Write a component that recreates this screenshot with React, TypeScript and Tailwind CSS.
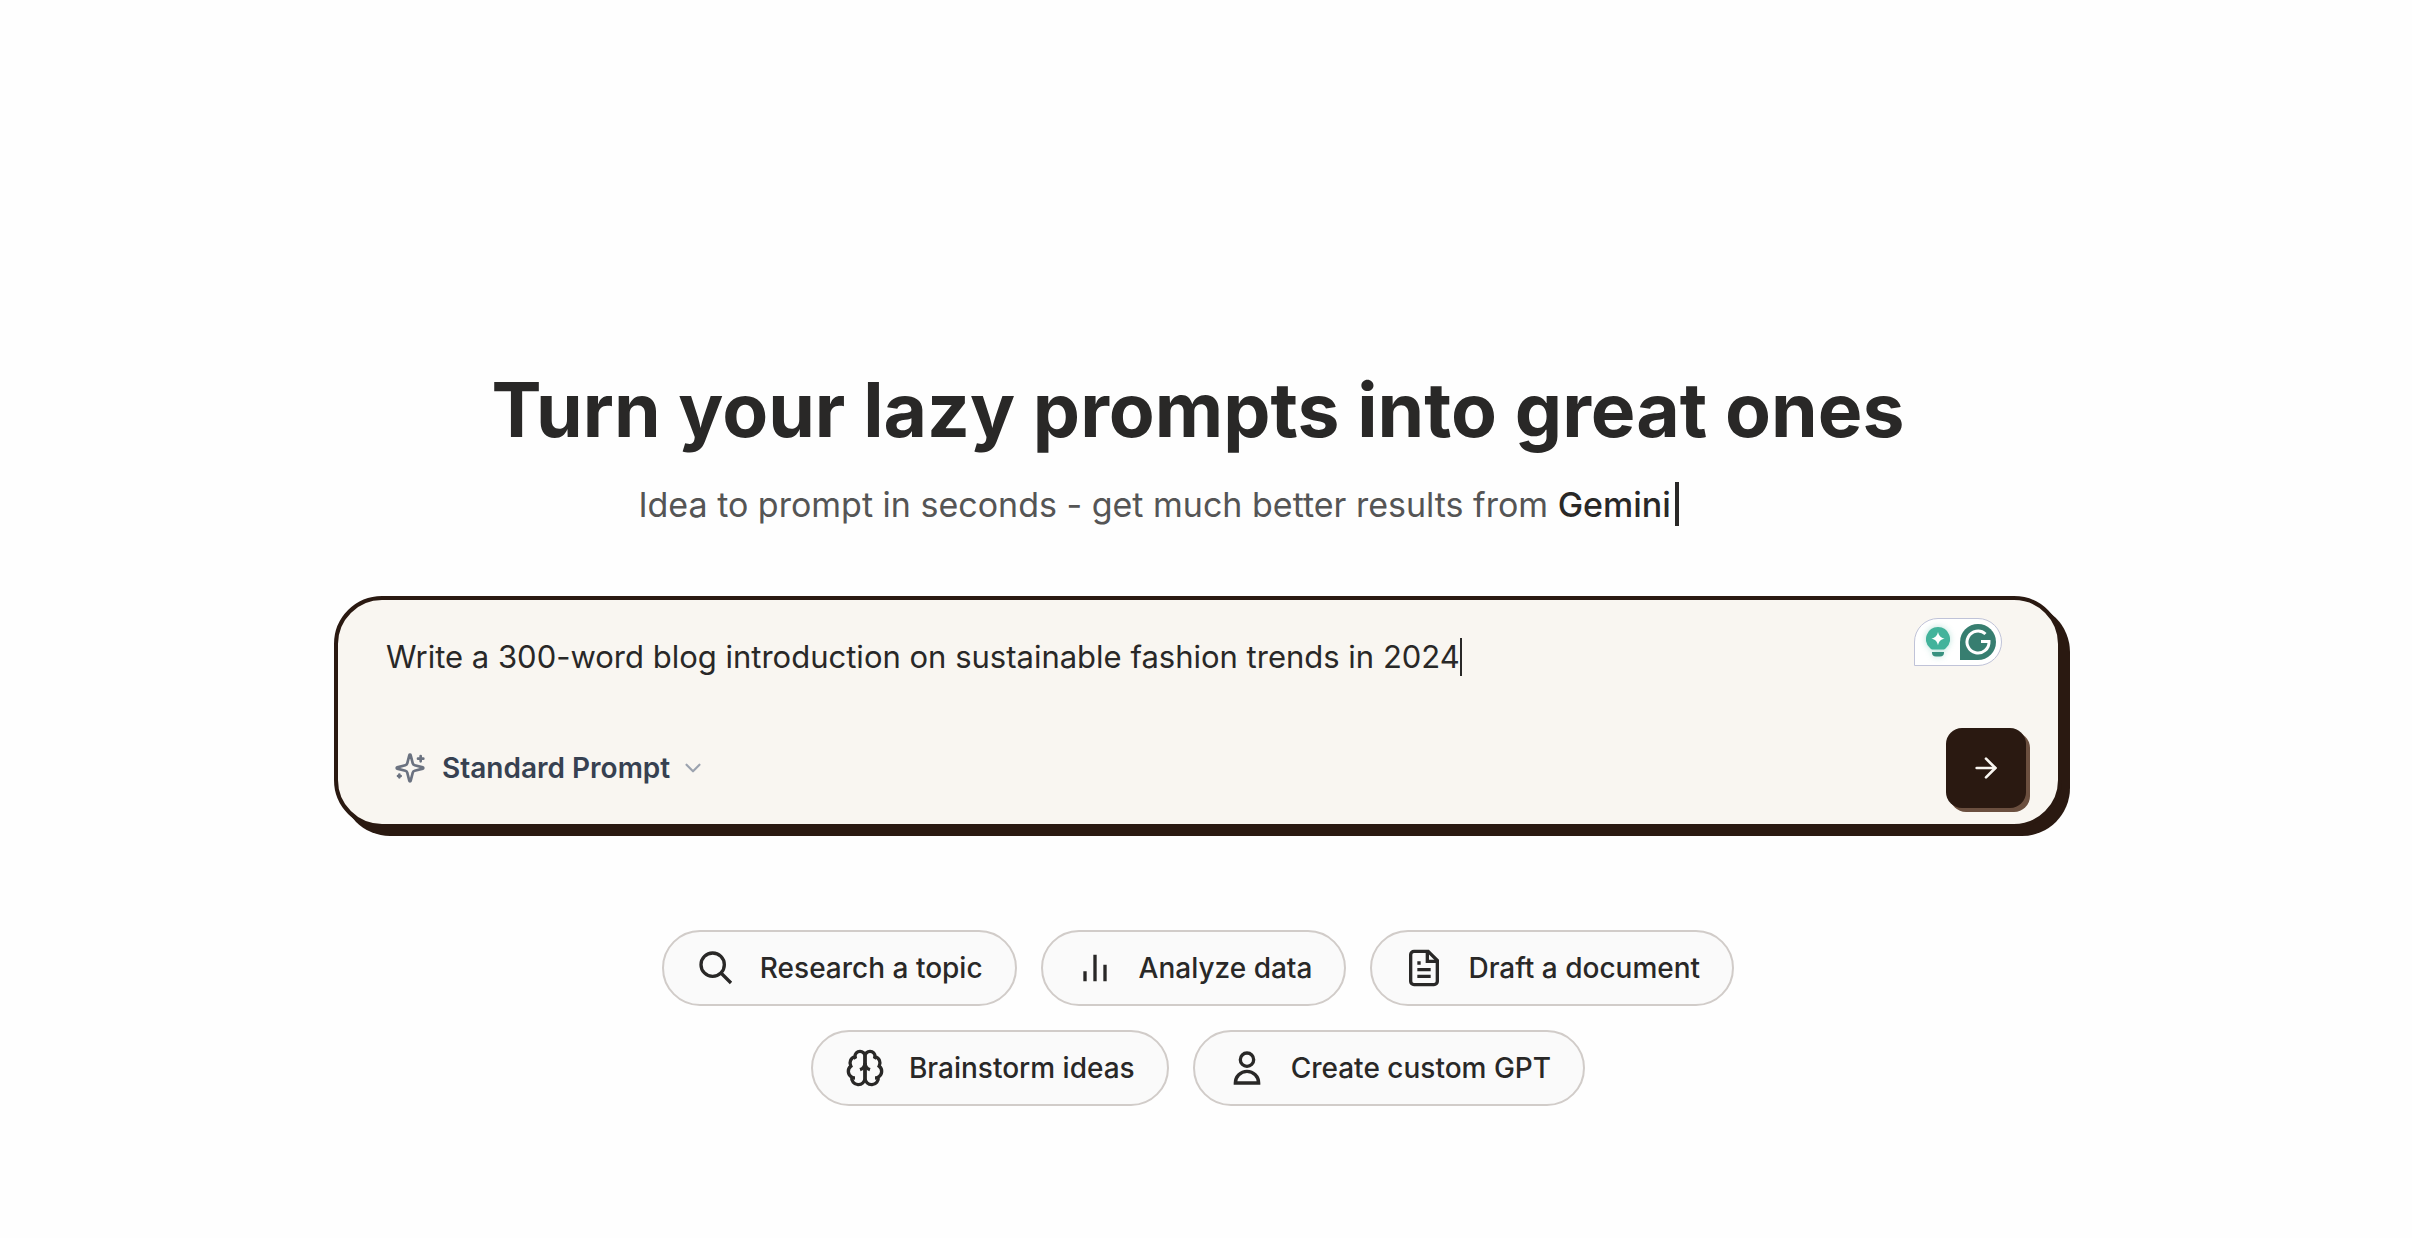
import { ArrowRight, ChevronDown } from "lucide-react";
import type { ReactNode } from "react";

const Glyph = ({ children }: { children: ReactNode }) => (
  <svg viewBox="0 0 24 24" fill="none" stroke="currentColor" strokeWidth={2} className="size-10 shrink-0" aria-hidden="true">
    {children}
  </svg>
);

const searchIcon = (
  <Glyph>
    <path d="M21 21l-6-6m2-5a7 7 0 11-14 0 7 7 0 0114 0z" />
  </Glyph>
);

const chartIcon = (
  <Glyph>
    <path d="M18 20V10M12 20V4M6 20v-6" />
  </Glyph>
);

const documentIcon = (
  <Glyph>
    <path d="M14.500 2H6a2 2 0 0 0-2 2v16a2 2 0 0 0 2 2h12a2 2 0 0 0 2-2V7.500L14.500 2z" />
    <path d="M14 2v6h6" />
    <path d="M10 9H8M16 13H8M16 17H8" />
  </Glyph>
);

const brainIcon = (
  <Glyph>
    <path d="M12 5a3 3 0 1 0-5.997.125 4 4 0 0 0-2.526 5.77 4 4 0 0 0 .556 6.588A4 4 0 1 0 12 18Z" />
    <path d="M12 5a3 3 0 1 1 5.997.125 4 4 0 0 1 2.526 5.77 4 4 0 0 1-.556 6.588A4 4 0 1 1 12 18Z" />
    <path d="M15 13a4.5 4.5 0 0 1-3-4 4.5 4.5 0 0 1-3 4" />
    <path d="M17.599 6.5a3 3 0 0 0 .399-1.375M6.003 5.125A3 3 0 0 0 6.401 6.5M3.477 10.896a4 4 0 0 1 .585-.396M19.938 10.5a4 4 0 0 1 .585.396M6 18a4 4 0 0 1-1.967-.516M19.967 17.484A4 4 0 0 1 18 18" />
  </Glyph>
);

const personIcon = (
  <Glyph>
    <path d="M16 7a4 4 0 11-8 0 4 4 0 018 0zM12 14a7 7 0 00-7 7h14a7 7 0 00-7-7z" />
  </Glyph>
);

const suggestions = [
  { label: "Research a topic", icon: searchIcon },
  { label: "Analyze data", icon: chartIcon },
  { label: "Draft a document", icon: documentIcon },
  { label: "Brainstorm ideas", icon: brainIcon },
  { label: "Create custom GPT", icon: personIcon },
];

function SparklesIcon() {
  return (
    <svg
      viewBox="0 0 24 24"
      fill="none"
      stroke="currentColor"
      strokeWidth={2}
      strokeLinecap="round"
      strokeLinejoin="round"
      className="size-8 text-[#6b7280]"
      aria-hidden="true"
    >
      <path d="M9.937 15.5A2 2 0 0 0 8.5 14.063l-6.135-1.582a.5.5 0 0 1 0-.962L8.5 9.936A2 2 0 0 0 9.937 8.5l1.582-6.135a.5.5 0 0 1 .963 0L14.063 8.5A2 2 0 0 0 15.5 9.937l6.135 1.581a.5.5 0 0 1 0 .964L15.5 14.063a2 2 0 0 0-1.437 1.437l-1.582 6.135a.5.5 0 0 1-.963 0z" />
      <path d="M20 3v4M22 5h-4M4 17v2M5 18H3" />
    </svg>
  );
}

function AssistantBadge() {
  return (
    <div className="absolute top-[18px] right-14 flex h-12 w-[88px] items-center justify-between rounded-3xl rounded-bl-none border border-[#c0c3d8] bg-white pr-[5px] pl-[11px]">
      <svg viewBox="0 0 24 30" className="h-[30px] w-6 drop-shadow-[0_0_3px_#3fb39a60]" aria-hidden="true">
        <path d="M12 0a12 12 0 0 1 8 20.900c-1 1-1.700 1.700-3 1.700H7c-1.300 0-2-.7-3-1.700A12 12 0 0 1 12 0Z" fill="#43b39b" />
        <path d="M12 5c1.200 4.200 2.500 5.400 6.600 6.600-4.100 1.200-5.400 2.500-6.600 6.600-1.200-4.100-2.500-5.400-6.600-6.600C9.500 10.400 10.800 9.200 12 5Z" fill="#fff" />
        <path d="M6 25h12v.5a4 4 0 0 1-4 4h-4a4 4 0 0 1-4-4Z" fill="#37917f" />
      </svg>
      <svg viewBox="0 0 36 36" className="size-9" aria-hidden="true">
        <path d="M18 0a18 18 0 1 1 0 36H0V18A18 18 0 0 1 18 0Z" fill="#377e70" />
        <path d="M25.500 10A11 11 0 1 0 29 17.500H21" fill="none" stroke="#fff" strokeWidth="3" />
      </svg>
    </div>
  );
}

export default function App() {
  return (
    <main className="flex min-h-screen flex-col items-center bg-[#fefefe] pt-[362px] pr-4 font-['Inter',sans-serif] text-[#292827]">
      <h1 className="text-center text-[75px] leading-[96px] font-bold">Turn your lazy prompts into great ones</h1>
      <p className="mt-[18px] flex h-14 items-center text-[34px] whitespace-pre text-[#555555]">
        <span>Idea to prompt in seconds - get much better results from </span>
        <span className="flex min-w-[200px] items-center font-medium text-[#292827]">
          Gemini
          <span className="ml-1 h-11 w-1 bg-[#292827]" />
        </span>
      </p>

      <form
        onSubmit={(e) => e.preventDefault()}
        className="relative mt-16 flex w-full max-w-[1728px] flex-col justify-between rounded-[48px] border-4 border-[#2a1911] bg-[#f9f6f1] pt-8 pr-8 pb-4 pl-12 shadow-[8px_8px_0_#2a1911]"
      >
        <div className="flex h-[50px] items-center">
          <input
            aria-label="Prompt"
            defaultValue="Write a 300-word blog introduction on sustainable fashion trends in 2024"
            className="field-sizing-content bg-transparent text-[31px] outline-none"
          />
          <span className="h-[38px] w-0.5 bg-[#292827]" />
        </div>
        <AssistantBadge />
        <div className="mt-[46px] flex items-center justify-between pl-2">
          <button type="button" className="flex items-center text-[28px] font-semibold text-[#374151]">
            <SparklesIcon />
            <span className="ml-4">Standard Prompt</span>
            <ChevronDown className="ml-2.5 size-[26px] text-[#9ca3af]" strokeWidth={2} />
          </button>
          <button
            type="submit"
            aria-label="Generate prompt"
            className="grid size-20 place-items-center rounded-2xl bg-[#2a1911] text-[#f9f6f1] shadow-[4px_4px_0_#6b4f3f]"
          >
            <ArrowRight className="size-8" />
          </button>
        </div>
      </form>

      <div className="mt-[102px] flex max-w-[1152px] flex-wrap justify-center gap-6">
        {suggestions.map(({ label, icon }) => (
          <button
            key={label}
            type="button"
            className="flex items-center gap-6 rounded-full border-2 border-[#d1ccc9] bg-[#fafafa] px-8 py-4 text-[28px] leading-10 font-medium"
          >
            {icon}
            {label}
          </button>
        ))}
      </div>
    </main>
  );
}
